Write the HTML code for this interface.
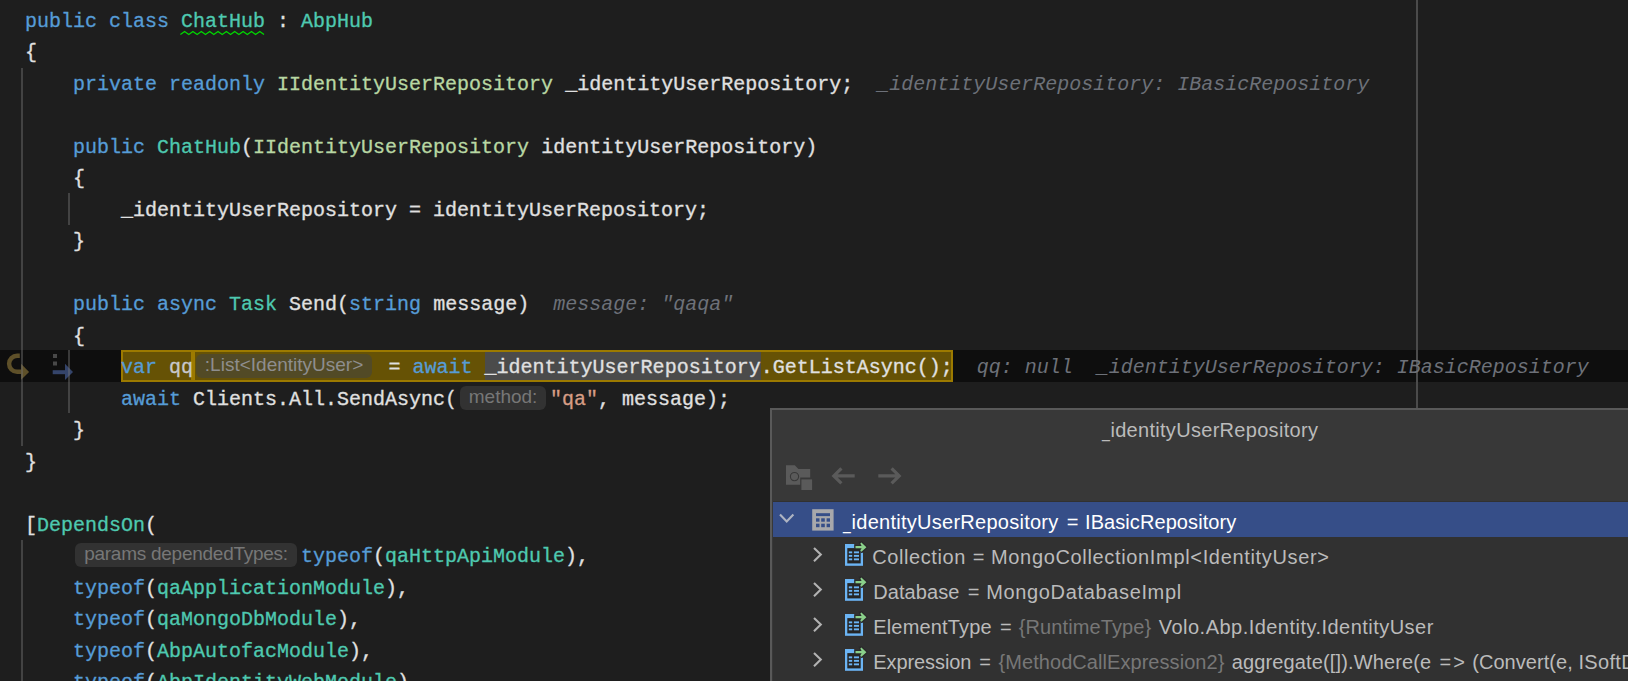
<!DOCTYPE html>
<html>
<head>
<meta charset="utf-8">
<title>ChatHub debug</title>
<style>
html,body{margin:0;padding:0;}
body{width:1628px;height:681px;overflow:hidden;background:#1e1e1e;position:relative;
  font-family:"Liberation Mono",monospace;font-size:20px;color:#e0e0e0;}
.l{position:absolute;left:25px;margin-top:2px;-webkit-text-stroke:0.3px;height:32px;line-height:32px;white-space:pre;letter-spacing:0;}
.k{color:#569cd6;}
.c{color:#4ec9b0;}
.i{color:#b8d7a3;}
.s{color:#d69d85;}
.d{color:#6d7179;font-style:italic;-webkit-text-stroke:0;}
.h{display:inline-block;vertical-align:top;height:32px;position:relative;}
.h b{-webkit-text-stroke:0;position:absolute;top:2px;height:24px;line-height:21px;border-radius:6px;background:#323232;color:#777;
  font-family:"Liberation Sans",sans-serif;font-weight:normal;font-size:19px;text-align:center;white-space:pre;}
.g{position:absolute;width:2px;background:rgba(120,120,120,0.42);}
#cur{position:absolute;left:0;top:350px;width:1628px;height:32px;background:#0e0e0e;}
.exe{position:absolute;top:350px;height:32px;background:#665205;box-sizing:border-box;border:2px solid #9c7a00;}
#sel{position:absolute;left:485px;top:352px;width:276px;height:28px;background:#4b4b4b;}
#margin{position:absolute;left:1416px;top:0;width:2px;height:410px;background:#4b4b4b;}
#pop{position:absolute;left:770px;top:408px;width:880px;height:300px;background:#383838;box-sizing:border-box;border:2px solid #595959;}
#tree{position:absolute;left:773px;top:501px;width:860px;height:200px;background:#313131;}
#selrow{position:absolute;left:773px;top:502px;width:860px;height:35px;background:#364e88;}
#ptxt{position:absolute;left:0;top:0;font-family:"Liberation Sans",sans-serif;font-size:20px;color:#bbb;}
.t{position:absolute;white-space:pre;height:26px;line-height:26px;}
.t.m{color:#777;}
.t.w{color:#fff;}
svg{position:absolute;overflow:visible;}
</style>
</head>
<body>
<div id="cur"></div>
<div id="margin"></div>
<div class="exe" style="left:121px;width:72px"></div>
<div class="exe" style="left:193px;width:760px"></div>
<div id="sel"></div>

<svg width="90" height="40" style="left:0;top:345px" viewBox="0 345 90 40">
  <path d="M19.8 355.8 H17.1 A8 8 0 0 0 17.1 371.8 H21.5" fill="none" stroke="#5e5029" stroke-width="4.4"/>
  <path d="M21.1 363.8 L29.1 372 L21.1 379.8 Z" fill="#5e5029"/>
  <rect x="53" y="354" width="4" height="4" fill="#484848"/>
  <rect x="53" y="361.5" width="4" height="4" fill="#484848"/>
  <rect x="52.7" y="370.2" width="13" height="4" fill="#34446a"/>
  <path d="M65 363.8 L73 372 L65 380 Z" fill="#34446a"/>
</svg>
<div class="g" style="left:21px;top:68px;height:378px;"></div>
<div class="g" style="left:68px;top:193px;height:32px;"></div>
<div class="g" style="left:68px;top:350px;height:63px;"></div>
<div class="g" style="left:21px;top:540px;height:141px;"></div>

<svg width="100" height="10" style="left:175px;top:28px" viewBox="175 28 100 10"><polyline points="180.4,34.5 184.6,31.5 188.8,34.5 192.9,31.5 197.1,34.5 201.3,31.5 205.5,34.5 209.7,31.5 213.8,34.5 218.0,31.5 222.2,34.5 226.4,31.5 230.6,34.5 234.7,31.5 238.9,34.5 243.1,31.5 247.3,34.5 251.5,31.5 255.6,34.5 259.8,31.5 264.0,34.5" fill="none" stroke="#00d800" stroke-width="1.35" stroke-linejoin="miter"/></svg>
<div class="l" style="top:4px"><span class="k">public</span> <span class="k">class</span> <span class="c" id="chathub">ChatHub</span> : <span class="c">AbpHub</span></div>
<div class="l" style="top:35px">{</div>
<div class="l" style="top:67px">    <span class="k">private</span> <span class="k">readonly</span> <span class="i">IIdentityUserRepository</span> _identityUserRepository;  <span class="d">_identityUserRepository: IBasicRepository</span></div>
<div class="l" style="top:130px">    <span class="k">public</span> <span class="c">ChatHub</span>(<span class="i">IIdentityUserRepository</span> identityUserRepository)</div>
<div class="l" style="top:161px">    {</div>
<div class="l" style="top:193px">        _identityUserRepository = identityUserRepository;</div>
<div class="l" style="top:224px">    }</div>
<div class="l" style="top:287px">    <span class="k">public</span> <span class="k">async</span> <span class="c">Task</span> Send(<span class="k">string</span> message)  <span class="d">message: "qaqa"</span></div>
<div class="l" style="top:319px">    {</div>
<div class="l" style="top:350px">        <span class="k">var</span> <span style="color:#c8c8cc">qq</span><span class="h" style="width:183.5px"><b style="left:3px;width:176px;background:#524a26;color:#8e8e8e;">:List&lt;IdentityUser&gt;</b></span> = <span class="k">await</span> _identityUserRepository.GetListAsync();  <span class="d">qq: null  _identityUserRepository: IBasicRepository</span></div>
<div class="l" style="top:382px">        <span class="k">await</span> Clients.All.SendAsync(<span class="h" style="width:93px"><b style="left:3px;width:86px;">method:</b></span><span class="s">"qa"</span>, message);</div>
<div class="l" style="top:413px">    }</div>
<div class="l" style="top:445px">}</div>
<div class="l" style="top:508px">[<span class="c">DependsOn</span>(</div>
<div class="l" style="top:539px">    <span class="h" style="width:228px"><b style="left:2px;width:222px;letter-spacing:-0.26px;">params dependedTypes:</b></span><span class="k">typeof</span>(<span class="c">qaHttpApiModule</span>),</div>
<div class="l" style="top:571px">    <span class="k">typeof</span>(<span class="c">qaApplicationModule</span>),</div>
<div class="l" style="top:602px">    <span class="k">typeof</span>(<span class="c">qaMongoDbModule</span>),</div>
<div class="l" style="top:634px">    <span class="k">typeof</span>(<span class="c">AbpAutofacModule</span>),</div>
<div class="l" style="top:665px">    <span class="k">typeof</span>(<span class="c">AbpIdentityWebModule</span>),</div>

<div id="pop"></div>
<div id="tree"></div>
<div id="selrow"></div>
<!--ICONS-->
<svg width="1628" height="681" style="left:0;top:0" viewBox="0 0 1628 681">
  <!-- toolbar -->
  <g fill="#5a5a5a">
    <path d="M786 465.3 H794.8 L798.4 468.9 H810.2 V477.6 H800.2 V484.8 H786 Z"/>
    <rect x="801.4" y="479.4" width="10.7" height="10.6"/>
  </g>
  <circle cx="794.5" cy="476.6" r="4.1" fill="none" stroke="#383838" stroke-width="1.1"/>
  <g fill="none" stroke="#5a5a5a" stroke-width="3.2">
    <path d="M854.7 475.9 H834.5 M841.4 468.4 L833.8 475.9 L841.4 483.4"/>
    <path d="M878.3 475.9 H898.5 M891.6 468.4 L899.2 475.9 L891.6 483.4"/>
  </g>
  <!-- selected row -->
  <polyline points="780,514.6 786.7,521.6 793.4,514.6" fill="none" stroke="#aeb4c2" stroke-width="2.1"/>
  <rect x="812.2" y="509.2" width="21.4" height="21.4" fill="#a8a8ab"/>
  <g fill="#364e88">
    <rect x="816" y="513.2" width="14" height="2.9"/>
    <rect x="816" y="518.3" width="3.5" height="3.4"/><rect x="821.2" y="518.3" width="3.6" height="3.4"/><rect x="826.6" y="518.3" width="3.4" height="3.4"/>
    <rect x="816" y="523.7" width="3.5" height="3.5"/><rect x="821.2" y="523.7" width="3.6" height="3.5"/><rect x="826.6" y="523.7" width="3.4" height="3.5"/>
  </g>
<g transform="translate(0,0)">
  <polyline points="814,548 820.8,554.6 814,561.2" fill="none" stroke="#b2b2b2" stroke-width="2.1"/>
  <rect x="845" y="544" width="18" height="21.8" fill="#6bb4f4"/>
  <rect x="847.3" y="548.1" width="13.4" height="15.3" fill="#252525"/>
  <path d="M854.2 543 H868 V552.6 H860.7 V548.1 H854.2 Z" fill="#313131"/>
  <path d="M854.6 545 H859.6 L858.6 541.4 L862 541.2 L867.6 546.4 V548 L862 553 L860.7 552.6 V549.3 H854.6 Z" fill="#2a2a2a"/>
  <rect x="848.8" y="551.4" width="3.4" height="1.9" fill="#6bb4f4"/><rect x="853.9" y="551.4" width="5.1" height="1.9" fill="#6bb4f4"/>
  <rect x="848.8" y="554.9" width="3.4" height="1.9" fill="#6bb4f4"/><rect x="853.9" y="554.9" width="5.1" height="1.9" fill="#6bb4f4"/>
  <rect x="848.8" y="558.4" width="3.4" height="1.9" fill="#6bb4f4"/><rect x="853.9" y="558.4" width="5.1" height="1.9" fill="#6bb4f4"/>
  <path d="M855.5 546.1 H861.6 L860.3 543.6 L861.4 542.6 L866.4 547.15 L861.4 551.7 L860.3 550.7 L861.6 548.2 H855.5 Z" fill="#8ad08a"/>
</g><g transform="translate(0,35)">
  <polyline points="814,548 820.8,554.6 814,561.2" fill="none" stroke="#b2b2b2" stroke-width="2.1"/>
  <rect x="845" y="544" width="18" height="21.8" fill="#6bb4f4"/>
  <rect x="847.3" y="548.1" width="13.4" height="15.3" fill="#252525"/>
  <path d="M854.2 543 H868 V552.6 H860.7 V548.1 H854.2 Z" fill="#313131"/>
  <path d="M854.6 545 H859.6 L858.6 541.4 L862 541.2 L867.6 546.4 V548 L862 553 L860.7 552.6 V549.3 H854.6 Z" fill="#2a2a2a"/>
  <rect x="848.8" y="551.4" width="3.4" height="1.9" fill="#6bb4f4"/><rect x="853.9" y="551.4" width="5.1" height="1.9" fill="#6bb4f4"/>
  <rect x="848.8" y="554.9" width="3.4" height="1.9" fill="#6bb4f4"/><rect x="853.9" y="554.9" width="5.1" height="1.9" fill="#6bb4f4"/>
  <rect x="848.8" y="558.4" width="3.4" height="1.9" fill="#6bb4f4"/><rect x="853.9" y="558.4" width="5.1" height="1.9" fill="#6bb4f4"/>
  <path d="M855.5 546.1 H861.6 L860.3 543.6 L861.4 542.6 L866.4 547.15 L861.4 551.7 L860.3 550.7 L861.6 548.2 H855.5 Z" fill="#8ad08a"/>
</g><g transform="translate(0,70)">
  <polyline points="814,548 820.8,554.6 814,561.2" fill="none" stroke="#b2b2b2" stroke-width="2.1"/>
  <rect x="845" y="544" width="18" height="21.8" fill="#6bb4f4"/>
  <rect x="847.3" y="548.1" width="13.4" height="15.3" fill="#252525"/>
  <path d="M854.2 543 H868 V552.6 H860.7 V548.1 H854.2 Z" fill="#313131"/>
  <path d="M854.6 545 H859.6 L858.6 541.4 L862 541.2 L867.6 546.4 V548 L862 553 L860.7 552.6 V549.3 H854.6 Z" fill="#2a2a2a"/>
  <rect x="848.8" y="551.4" width="3.4" height="1.9" fill="#6bb4f4"/><rect x="853.9" y="551.4" width="5.1" height="1.9" fill="#6bb4f4"/>
  <rect x="848.8" y="554.9" width="3.4" height="1.9" fill="#6bb4f4"/><rect x="853.9" y="554.9" width="5.1" height="1.9" fill="#6bb4f4"/>
  <rect x="848.8" y="558.4" width="3.4" height="1.9" fill="#6bb4f4"/><rect x="853.9" y="558.4" width="5.1" height="1.9" fill="#6bb4f4"/>
  <path d="M855.5 546.1 H861.6 L860.3 543.6 L861.4 542.6 L866.4 547.15 L861.4 551.7 L860.3 550.7 L861.6 548.2 H855.5 Z" fill="#8ad08a"/>
</g><g transform="translate(0,105)">
  <polyline points="814,548 820.8,554.6 814,561.2" fill="none" stroke="#b2b2b2" stroke-width="2.1"/>
  <rect x="845" y="544" width="18" height="21.8" fill="#6bb4f4"/>
  <rect x="847.3" y="548.1" width="13.4" height="15.3" fill="#252525"/>
  <path d="M854.2 543 H868 V552.6 H860.7 V548.1 H854.2 Z" fill="#313131"/>
  <path d="M854.6 545 H859.6 L858.6 541.4 L862 541.2 L867.6 546.4 V548 L862 553 L860.7 552.6 V549.3 H854.6 Z" fill="#2a2a2a"/>
  <rect x="848.8" y="551.4" width="3.4" height="1.9" fill="#6bb4f4"/><rect x="853.9" y="551.4" width="5.1" height="1.9" fill="#6bb4f4"/>
  <rect x="848.8" y="554.9" width="3.4" height="1.9" fill="#6bb4f4"/><rect x="853.9" y="554.9" width="5.1" height="1.9" fill="#6bb4f4"/>
  <rect x="848.8" y="558.4" width="3.4" height="1.9" fill="#6bb4f4"/><rect x="853.9" y="558.4" width="5.1" height="1.9" fill="#6bb4f4"/>
  <path d="M855.5 546.1 H861.6 L860.3 543.6 L861.4 542.6 L866.4 547.15 L861.4 551.7 L860.3 550.7 L861.6 548.2 H855.5 Z" fill="#8ad08a"/>
</g>
</svg>
<!--/ICONS-->
<div id="ptxt">
<!--TXT-->
<span class="t w" style="left:842.4px;top:508.6px;transform:scaleX(0.692);transform-origin:0 0;margin-left:0.69px">_</span>
<span class="t w" style="left:851.6px;top:508.6px;letter-spacing:0.26px">identityUserRepository</span>
<span class="t w" style="left:1066.8px;top:508.6px;letter-spacing:0.00px">=</span>
<span class="t w" style="left:1085.0px;top:508.6px;letter-spacing:0.08px">IBasicRepository</span>
<span class="t" style="left:872.3px;top:543.6px;letter-spacing:0.58px">Collection</span>
<span class="t" style="left:972.7px;top:543.6px;letter-spacing:0.00px">=</span>
<span class="t" style="left:991.0px;top:543.6px;letter-spacing:0.66px">MongoCollectionImpl&lt;IdentityUser&gt;</span>
<span class="t" style="left:873.2px;top:578.5px;letter-spacing:0.09px">Database</span>
<span class="t" style="left:967.8px;top:578.5px;letter-spacing:0.00px">=</span>
<span class="t" style="left:986.2px;top:578.5px;letter-spacing:0.65px">MongoDatabaseImpl</span>
<span class="t" style="left:873.2px;top:613.5px;letter-spacing:0.18px">ElementType</span>
<span class="t" style="left:1000.0px;top:613.5px;letter-spacing:0.00px">=</span>
<span class="t m" style="left:1018.7px;top:613.5px;letter-spacing:0.11px">{RuntimeType}</span>
<span class="t" style="left:1158.8px;top:613.5px;letter-spacing:0.47px">Volo.Abp.Identity.IdentityUser</span>
<span class="t" style="left:873.2px;top:648.5px;letter-spacing:-0.07px">Expression</span>
<span class="t" style="left:979.2px;top:648.5px;letter-spacing:0.00px">=</span>
<span class="t m" style="left:998.5px;top:648.5px;letter-spacing:0.06px">{MethodCallExpression2}</span>
<span class="t" style="left:1231.7px;top:648.5px;letter-spacing:0.14px">aggregate([]).Where(e</span>
<span class="t" style="left:1439.4px;top:648.5px;letter-spacing:2.12px">=&gt;</span>
<span class="t" style="left:1472.2px;top:648.5px;letter-spacing:0.06px">(Convert(e,</span>
<span class="t" style="left:1578.5px;top:648.5px;letter-spacing:0.31px">ISoftDelete).IsDeleted</span>
<span class="t" style="left:1100.8px;top:417.2px;transform:scaleX(0.708);transform-origin:0 0;margin-left:0.71px">_</span>
<span class="t" style="left:1110.4px;top:417.2px;letter-spacing:0.30px">identityUserRepository</span>
<!--/TXT-->
</div>
</body>
</html>
